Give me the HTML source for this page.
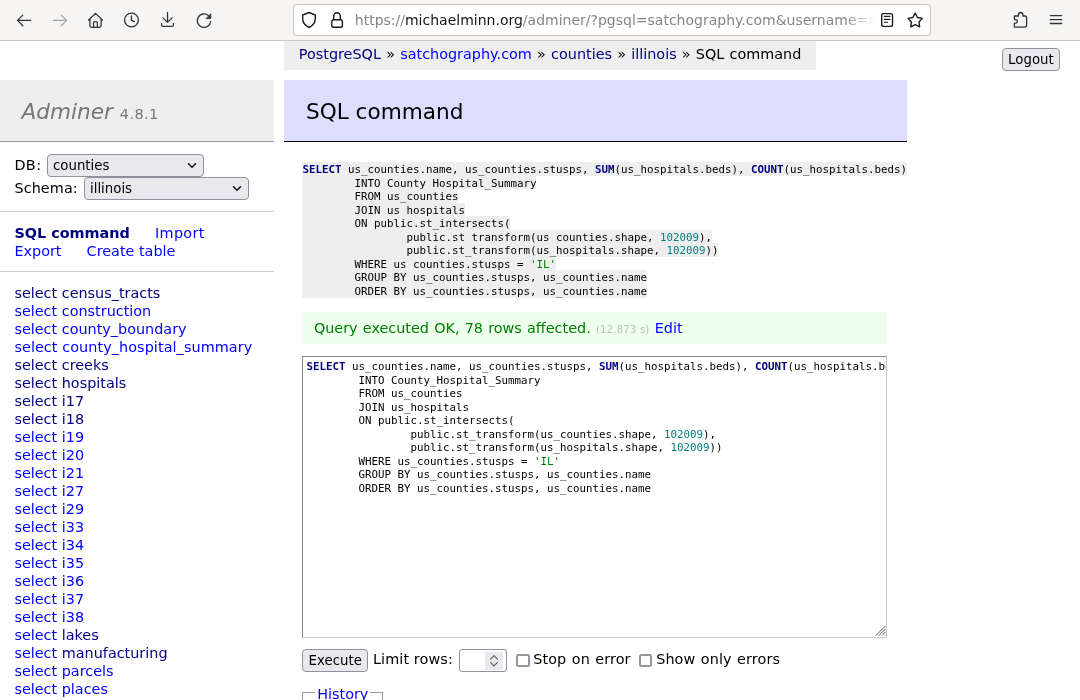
<!DOCTYPE html>
<html lang="en">
<head>
<meta charset="utf-8">
<title>SQL command - counties - Adminer</title>
<style>
html, body { margin: 0; padding: 0; }
body { width: 1080px; height: 700px; overflow: hidden; position: relative; background: #fff; color: #000;
  font: 14.4px/18px "DejaVu Sans", "Liberation Sans", sans-serif; }
a { color: #0000ff; text-decoration: none; }
a.v { color: #000080; }

/* ---------- browser chrome ---------- */
#chrome { will-change: transform; position: absolute; left: 0; top: 0; width: 1080px; height: 40px; background: #f6f5f4; border-bottom: 1px solid #cdc7c2; }
#chrome svg { position: absolute; overflow: visible; z-index: 2; }
#urlbar { position: absolute; left: 293px; top: 4px; width: 636px; height: 30px; border: 1px solid #cdc7c2; border-radius: 4px; background: #fff; }
#url { position: absolute; left: 60.8px; top: 0; width: 522px; height: 30px; line-height: 30px; font-size: 14px; white-space: nowrap; overflow: hidden; color: #86868a;
  -webkit-mask-image: linear-gradient(to right, #000 0, #000 490px, transparent 520px); mask-image: linear-gradient(to right, #000 0, #000 490px, transparent 520px); }
#url b { font-weight: normal; color: #15141a; }

/* ---------- page ---------- */
#page { will-change: transform; position: absolute; left: 0; top: 41px; width: 1080px; height: 659px; overflow: hidden; }
#breadcrumb { position: absolute; top: 0; left: 284.4px; background: #eee; height: 28.8px; line-height: 27.92px; word-spacing: 0.62px; padding: 0 14.4px; white-space: nowrap; margin: 0; }
#logout { position: absolute; left: 1002px; top: 7px; width: 57.8px; text-align: center; padding-left: 0; padding-right: 0; }
.btn { box-sizing: border-box; display: inline-block; font: 13.33px/16px "DejaVu Sans", "Liberation Sans", sans-serif; color: #000; background: #e9e9ed; border: 1px solid #8f8f9d; border-radius: 4px; padding: 3.2px 5px 1.3px; height: 22.6px; vertical-align: baseline; }

#menu { position: absolute; left: 0; top: 38.8px; width: 273.6px; }
#menu h1 { font-size: 21.6px; line-height: 27px; margin: 0; padding: 18.28px 21.6px 16.28px; border-bottom: 1px solid #999; font-weight: normal; color: #777; background: #eee; }
#menu h1 i { font-style: italic; }
#menu h1 .version { font-size: 14.47px; line-height: 1.25; color: #777; letter-spacing: 0.4px; }
#menu p { padding: 11.52px 14.4px; margin: 0; border-bottom: 1px solid #ccc; }
#dbs .row { display: block; position: relative; height: 23px; line-height: 23px; white-space: nowrap; }
#dbs .row .sel { position: absolute; top: 0; }
#menu p.links a { white-space: nowrap; margin-right: 20px; }
#menu .active { font-weight: bold; }
.sel { box-sizing: border-box; display: inline-block; position: relative; height: 22.3px; border: 1px solid #8f8f9d; border-radius: 4px; background: #e9e9ed; font: 13.33px/21px "DejaVu Sans", "Liberation Sans", sans-serif; padding: 0 0 0 5px; vertical-align: baseline; color: #000; }
.sel svg { position: absolute; right: 5.5px; top: 7px; }
#tables { margin: 0; padding: 11.52px 14.4px; list-style: none; white-space: nowrap; }
#tables li { list-style: none; height: 18px; }

#content { position: absolute; left: 302.4px; top: 38.8px; width: 604.8px; }
#content h2 { font-size: 21.6px; line-height: 27px; margin: 0 0 20px -18px; padding: 18.28px 21.6px 16.28px; border-bottom: 1px solid #000; color: #000; font-weight: normal; background: #ddf; }
pre { margin: 0; font: 10.8px/13.5px "DejaVu Sans Mono", "Liberation Mono", monospace; tab-size: 8; -moz-tab-size: 8; }
code { font: inherit; }
.ln { display: block; width: fit-content; height: 13.5px; line-height: 15.5px; white-space: pre; }
#q1 .ln { background: #eee; position: relative; }
#q1 .ln.ov { margin-top: -0.6px; padding-top: 0.6px; }
#q1 .ln:last-child { height: 14.4px; margin-bottom: -0.9px; }
.kw { color: #000080; font-weight: bold; }
.num { color: #007f7f; }
.str { color: #008000; }
.message { color: #008000; background: #efe; padding: 7.2px 11.52px; margin: 14.4px 20px 0 0; word-spacing: 0.6px; }
.time { color: #c0c0c0; font-size: 10.08px; line-height: 1.25; letter-spacing: 0.2px; word-spacing: 0; }
#sqlarea { box-sizing: border-box; margin-top: 11.52px; width: 584.6px; height: 282.4px; border: 1px solid #ccc; border-top-color: #8a8a8a; border-left-color: #8a8a8a; padding: 2.55px 3px 0; overflow: hidden; position: relative; white-space: pre; }
#sqlarea svg { position: absolute; right: -1px; bottom: 0.5px; }
#controls { position: absolute; left: 0; top: 569.3px; white-space: nowrap; height: 22.6px; width: 600px; }
#controls .lbl { position: absolute; top: 1.3px; line-height: 18px; }
.numin { box-sizing: border-box; position: absolute; width: 47.5px; height: 22.8px; border: 1px solid #8f8f9d; border-radius: 3px; background: #fff; }
.spin { position: absolute; right: 3.3px; top: 2.2px; width: 17.6px; height: 17.6px; background: #e9e9ed; display: block; }
.spin svg { position: absolute; left: 0; top: 0; width: 17.6px; height: 17.6px; }
.chk { box-sizing: border-box; position: absolute; top: 4.8px; width: 13.6px; height: 13.6px; border: 2px solid #9696a3; border-radius: 2.5px; background: #fff; }
#history { position: absolute; box-sizing: border-box; left: 0; top: 612.2px; width: 80.6px; height: 40px; border: 1px solid #999; }
#history a { position: absolute; left: 11.5px; top: -8.4px; padding: 0 1.4px 0 2.3px; background: #fff; line-height: 18px; }
</style>
</head>
<body>

<div id="chrome">
  <svg id="icons" width="1080" height="40" viewBox="0 0 1080 40" style="left:0;top:0" fill="none" stroke="#2e3436" stroke-width="1.3" stroke-linecap="round" stroke-linejoin="round">
    <!-- back -->
    <path d="M30.6 20.4 H17.6 M22.8 15.1 L17.5 20.4 L22.8 25.7"/>
    <!-- forward (disabled) -->
    <path d="M53.5 20.4 H66.5 M61.3 15.1 L66.6 20.4 L61.3 25.7" stroke="#a3a5a5"/>
    <!-- home -->
    <path d="M88.6 20 L95.5 13.4 L102.4 20 M89.9 18.9 V25.6 Q89.9 27.3 91.6 27.3 H99.4 Q101.1 27.3 101.1 25.6 V18.9 M93.6 27.2 V23 Q93.6 21.6 95 21.6 H96 Q97.4 21.6 97.4 23 V27.2"/>
    <!-- history clock -->
    <circle cx="131.5" cy="20" r="6.9"/>
    <path d="M131.4 15.9 V20.1 L134.3 21.6"/>
    <!-- download -->
    <path d="M167.5 12.5 V22.3 M162.9 17.9 L167.5 22.4 L172.1 17.9 M161.6 23.7 V24.9 Q161.6 26.4 163.1 26.4 H171.9 Q173.4 26.4 173.4 24.9 V23.7"/>
    <!-- reload -->
    <path d="M208.3 15.4 A6.75 6.75 0 1 0 210.7 21.6"/>
    <path d="M210.8 14.1 V18.6 H206.4 Z" fill="#2e3436" stroke-width="0.8"/>
    <!-- shield -->
    <path d="M309 12.5 L315.3 15 V18.6 C315.3 22.8 312.6 25.9 309 27.5 C305.4 25.9 302.7 22.8 302.7 18.6 V15 Z" stroke="#1c1b22" stroke-width="1.4"/>
    <!-- lock -->
    <rect x="331.8" y="19.7" width="10.6" height="7.5" rx="1.8" stroke="#1c1b22" stroke-width="1.4"/>
    <path d="M333.7 19.6 V16.3 A3.3 3.6 0 0 1 340.3 16.3 V19.6" stroke="#1c1b22" stroke-width="1.4"/>
    <!-- reader -->
    <rect x="881.7" y="13.6" width="10.8" height="12.8" rx="1.8" stroke="#1c1b22" stroke-width="1.4"/>
    <path d="M884.3 16.4 H889.9 M884.3 19.4 H889.9 M884.3 22.3 H887.6" stroke="#1c1b22" stroke-width="1.1"/>
    <!-- star -->
    <path d="M915.20 13.20 L917.52 17.50 L922.33 18.38 L918.96 21.92 L919.61 26.77 L915.20 24.65 L910.79 26.77 L911.44 21.92 L908.07 18.38 L912.88 17.50 Z" stroke="#1c1b22" stroke-width="1.4"/>
    <!-- extensions -->
    <path d="M1014.4 27.1 H1025 Q1026.6 27.1 1026.6 25.5 V17.6 Q1026.6 16 1025 16 H1022.9 V14.7 A2.2 2.2 0 0 0 1018.5 14.7 V16 H1014.4 V19.6 H1015.6 A1.8 1.8 0 0 1 1015.6 23.2 H1014.4 Z"/>
    <!-- menu -->
    <path d="M1050.3 15.6 H1061.7 M1050.3 19.6 H1061.7 M1050.3 23.5 H1061.7"/>
  </svg>
  <div id="urlbar">
    <div id="url">https://<b>michaelminn.org</b>/adminer/?pgsql=satchography.com&amp;username=michael&amp;db=counties&amp;ns=illinois&amp;sql=</div>
  </div>
</div>

<div id="page">
  <p id="breadcrumb"><a class="v" href="#">PostgreSQL</a> » <a href="#">satchography.com</a> » <a class="v" href="#">counties</a> » <a class="v" href="#">illinois</a> » SQL command</p>
  <span id="logout" class="btn">Logout</span>

  <div id="menu">
    <h1><i>Adminer</i> <span class="version">4.8.1</span></h1>
    <p id="dbs"><span class="row"><span style="letter-spacing:0.4px">DB:</span> <span class="sel" style="left:32.6px;top:0.6px;width:156.8px;height:22.4px">counties<svg width="10" height="8" viewBox="0 0 10 8"><path d="M1.5 1.8 L5 5.3 L8.5 1.8" fill="none" stroke="#15141a" stroke-width="1.6" stroke-linecap="round" stroke-linejoin="round"/></svg></span></span><span class="row"><span style="letter-spacing:0.1px">Schema:</span> <span class="sel" style="left:69.6px;top:0.6px;width:164.8px;height:22.4px">illinois<svg width="10" height="8" viewBox="0 0 10 8"><path d="M1.5 1.8 L5 5.3 L8.5 1.8" fill="none" stroke="#15141a" stroke-width="1.6" stroke-linecap="round" stroke-linejoin="round"/></svg></span></span></p>
    <p class="links"><a class="v active" href="#">SQL command</a> <a href="#" style="letter-spacing:0.35px;margin-left:0.5px">Import</a><br><a href="#">Export</a> <a href="#" style="margin-left:0.5px">Create table</a></p>
    <ul id="tables">
      <li><a class="v" href="#">select</a> <a class="v" href="#">census_tracts</a></li>
      <li><a href="#">select</a> <a href="#">construction</a></li>
      <li><a href="#">select</a> <a href="#">county_boundary</a></li>
      <li style="letter-spacing:0.07px"><a href="#">select</a> <a href="#">county_hospital_summary</a></li>
      <li><a class="v" href="#">select</a> <a class="v" href="#">creeks</a></li>
      <li><a class="v" href="#">select</a> <a class="v" href="#">hospitals</a></li>
      <li><a class="v" href="#">select</a> <a class="v" href="#">i17</a></li>
      <li><a class="v" href="#">select</a> <a class="v" href="#">i18</a></li>
      <li><a href="#">select</a> <a href="#">i19</a></li>
      <li><a href="#">select</a> <a href="#">i20</a></li>
      <li><a href="#">select</a> <a href="#">i21</a></li>
      <li><a href="#">select</a> <a href="#">i27</a></li>
      <li><a href="#">select</a> <a href="#">i29</a></li>
      <li><a href="#">select</a> <a href="#">i33</a></li>
      <li><a href="#">select</a> <a href="#">i34</a></li>
      <li><a href="#">select</a> <a href="#">i35</a></li>
      <li><a href="#">select</a> <a href="#">i36</a></li>
      <li><a href="#">select</a> <a href="#">i37</a></li>
      <li><a href="#">select</a> <a href="#">i38</a></li>
      <li><a href="#">select</a> <a class="v" href="#">lakes</a></li>
      <li><a href="#">select</a> <a class="v" href="#">manufacturing</a></li>
      <li><a href="#">select</a> <a href="#">parcels</a></li>
      <li><a href="#">select</a> <a href="#">places</a></li>
      <li><a href="#">select</a> <a href="#">railroads</a></li>
    </ul>
  </div>

  <div id="content">
    <h2>SQL command</h2>
<pre id="q1"><code><span class="ln"><span class="kw">SELECT</span> us_counties.name, us_counties.stusps, <span class="kw">SUM</span>(us_hospitals.beds), <span class="kw">COUNT</span>(us_hospitals.beds)</span><span class="ln">	INTO County_Hospital_Summary</span><span class="ln ov">	FROM us_counties</span><span class="ln">	JOIN us_hospitals</span><span class="ln ov">	ON public.st_intersects(</span><span class="ln">		public.st_transform(us_counties.shape, <span class="num">102009</span>),</span><span class="ln ov">		public.st_transform(us_hospitals.shape, <span class="num">102009</span>))</span><span class="ln">	WHERE us_counties.stusps = <span class="str">'IL'</span></span><span class="ln ov">	GROUP BY us_counties.stusps, us_counties.name</span><span class="ln">	ORDER BY us_counties.stusps, us_counties.name</span></code></pre>
    <p class="message">Query executed OK, 78 rows affected. <span class="time">(12.873 s)</span> <a href="#">Edit</a></p>
<pre id="sqlarea"><span class="ln"><span class="kw">SELECT</span> us_counties.name, us_counties.stusps, <span class="kw">SUM</span>(us_hospitals.beds), <span class="kw">COUNT</span>(us_hospitals.beds)</span><span class="ln">	INTO County_Hospital_Summary</span><span class="ln ov">	FROM us_counties</span><span class="ln">	JOIN us_hospitals</span><span class="ln ov">	ON public.st_intersects(</span><span class="ln">		public.st_transform(us_counties.shape, <span class="num">102009</span>),</span><span class="ln ov">		public.st_transform(us_hospitals.shape, <span class="num">102009</span>))</span><span class="ln">	WHERE us_counties.stusps = <span class="str">'IL'</span></span><span class="ln ov">	GROUP BY us_counties.stusps, us_counties.name</span><span class="ln">	ORDER BY us_counties.stusps, us_counties.name</span><svg width="12" height="12" viewBox="0 0 12 12"><path d="M0.8 10.6 L10.6 0.8 M3.8 10.6 L10.6 3.8 M6.8 10.6 L10.6 6.8 M9.8 10.6 L10.6 9.8" stroke="#4a4a4a" stroke-width="0.9" fill="none"/></svg></pre>
    <div id="controls">
      <span class="btn" style="position:absolute;left:0;top:0;width:65.7px;height:22.6px;text-align:center;padding-left:0;padding-right:0">Execute</span>
      <span class="lbl" style="left:70.6px;letter-spacing:0.1px">Limit rows:</span>
      <span class="numin" style="left:157px;top:-0.2px"><i class="spin"><svg width="18" height="18" viewBox="0 0 18 18"><path d="M5.7 7.3 L9.2 3.7 L12.7 7.3 M5.7 10.7 L9.2 14.3 L12.7 10.7" fill="none" stroke="#5b5b66" stroke-width="1.1" stroke-linecap="round" stroke-linejoin="round"/></svg></i></span>
      <span class="chk" style="left:213.7px"></span><span class="lbl" style="left:230.9px;word-spacing:0.8px;letter-spacing:0.08px">Stop on error</span>
      <span class="chk" style="left:336.5px"></span><span class="lbl" style="left:353.8px;word-spacing:0.8px;letter-spacing:0.09px">Show only errors</span>
    </div>
    <div id="history"><a href="#">History</a></div>
  </div>
</div>

</body>
</html>
